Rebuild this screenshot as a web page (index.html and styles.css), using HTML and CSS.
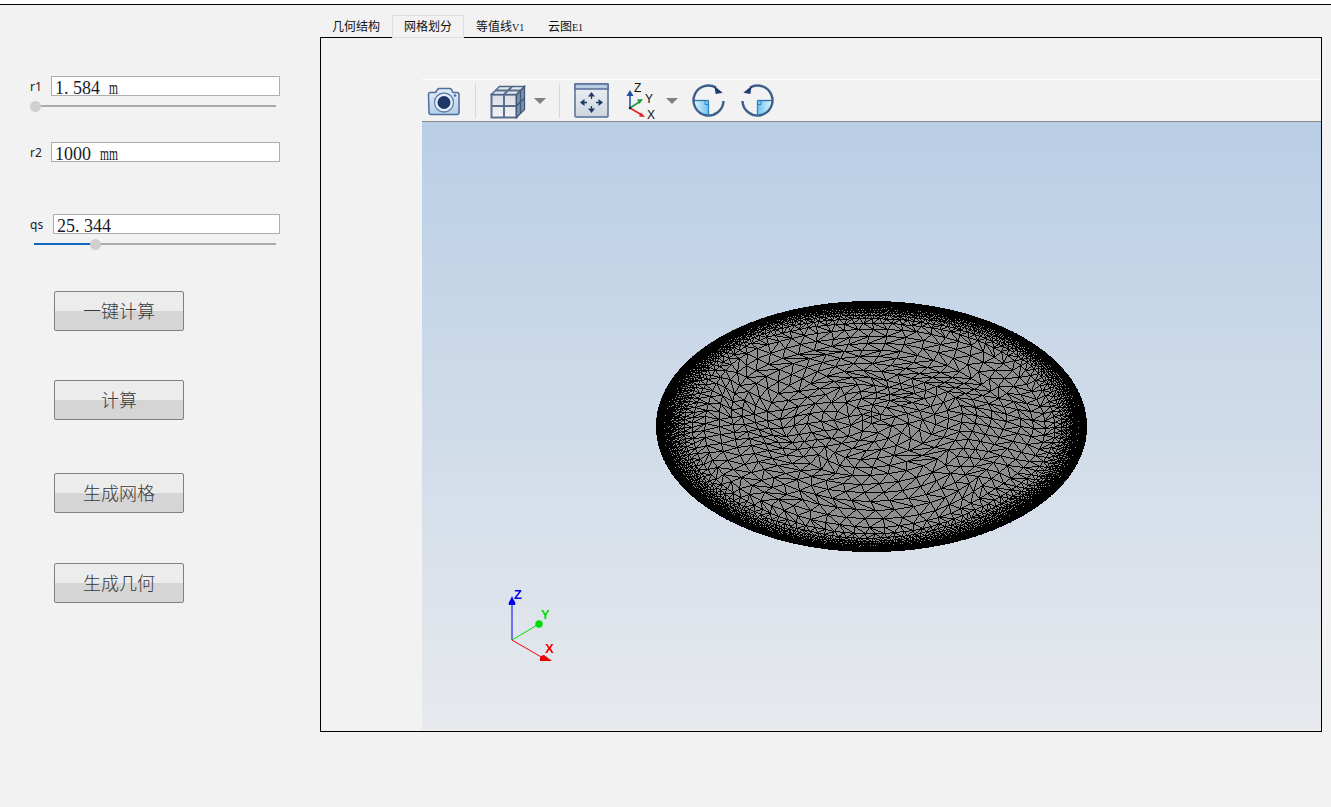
FILE: index.html
```html
<!DOCTYPE html>
<html lang="zh">
<head>
<meta charset="utf-8">
<title>网格划分</title>
<link rel="stylesheet" href="styles.css">
</head>
<body>
<div class="topbar"></div>
<div class="main">
  <aside class="sidebar">
    <div class="field field-r1">
      <label class="field-label">r1</label>
      <div class="input">1<span class="cell">.</span>584 <span class="latin">m</span></div>
    </div>
    <div class="slider slider-r1"><div class="handle" style="left:-5px"></div></div>

    <div class="field field-r2">
      <label class="field-label">r2</label>
      <div class="input">1000 <span class="latin latin-2">mm</span></div>
    </div>

    <div class="field field-qs">
      <label class="field-label label-wide">qs</label>
      <div class="input input-narrow">25<span class="cell">.</span>344</div>
    </div>
    <div class="slider slider-qs"><div class="fill" style="width:61px"></div><div class="handle" style="left:56px"></div></div>

    <button class="btn btn-1">一键计算</button>
    <button class="btn btn-2">计算</button>
    <button class="btn btn-3">生成网格</button>
    <button class="btn btn-4">生成几何</button>
  </aside>

  <section class="workspace">
    <div class="tabs">
      <div class="tab">几何结构</div>
      <div class="tab tab-active">网格划分</div>
      <div class="tab">等值线<span class="tab-latin">V1</span></div>
      <div class="tab">云图<span class="tab-latin">E1</span></div>
    </div>
    <div class="pane">
      <div class="viewer">
        <div class="toolbar">
          <svg class="ico ico-camera" width="36" height="32" viewBox="0 0 36 32">
            <defs>
              <linearGradient id="camBody" x1="0" y1="0" x2="0" y2="1"><stop offset="0" stop-color="#e4edf8"/><stop offset="1" stop-color="#b5cee9"/></linearGradient>
              <linearGradient id="cubeCell" x1="0" y1="0" x2="0" y2="1"><stop offset="0" stop-color="#d9dee6"/><stop offset="1" stop-color="#f2f3f5"/></linearGradient>
              <linearGradient id="fitBody" x1="0" y1="0" x2="0" y2="1"><stop offset="0" stop-color="#eef1f5"/><stop offset="1" stop-color="#cdd5e1"/></linearGradient>
              <linearGradient id="quad" x1="0" y1="0" x2="1" y2="0"><stop offset="0" stop-color="#6cc6ef"/><stop offset="1" stop-color="#e2f3fb"/></linearGradient>
            </defs>
            <path d="M2.500 9.500q0-2 2-2h5l2-3q.6-1 2-1h10q1.400 0 2 1l1.500 3h4q2 0 2 2v18q0 2-2 2h-26q-2 0-2-2z" fill="url(#camBody)" stroke="#4e6f99" stroke-width="1.500"/>
            <circle cx="18" cy="17.500" r="9.500" fill="#e8eff8" stroke="#5f80aa" stroke-width="1.300"/>
            <circle cx="18" cy="17.500" r="6.500" fill="#1d3768"/>
            <circle cx="29" cy="10.500" r="1.300" fill="#4e6f99"/>
          </svg>
          <span class="sep sep-1"></span>
          <svg class="ico ico-cube" width="36" height="36" viewBox="0 0 36 36">
            <path d="M1.500 11.500l8-8h25v23l-8 8z" fill="#5f7a9c"/>
            <path d="M1.500 11.500h25v23h-25z" fill="url(#cubeCell)" stroke="#5a6f8c" stroke-width="2"/>
            <path d="M1.500 11.500l8-8h25l-8 8z" fill="#e4e8ef" stroke="#4f6788" stroke-width="1.400"/>
            <path d="M14 11.500v23M1.500 23h25M22 3.500l-8 8M5.500 7.500h25" stroke="#5a6f8c" stroke-width="2" fill="none"/>
            <path d="M26.500 11.500l8-8v23l-8 8zM26.500 23l8-8M30.500 7.500v23" fill="#7b92ae" stroke="#3f5778" stroke-width="1.300"/>
          </svg>
          <span class="caret caret-1"></span>
          <span class="sep sep-2"></span>
          <svg class="ico ico-fit" width="35" height="35" viewBox="0 0 35 35">
            <rect x="1" y="1" width="33" height="33" rx="1" fill="url(#fitBody)" stroke="#566f93" stroke-width="1.500"/>
            <rect x="1" y="1" width="33" height="5" fill="#b7cbe3" stroke="#566f93" stroke-width="1.500"/>
            <g fill="#1f3a66" stroke="#1f3a66">
              <path d="M17.500 9l-3.500 4.500h7zM17.500 30l-3.500-4.500h7zM6 19.500l4.500-3.500v7zM29 19.500l-4.500-3.500v7z" stroke="none"/>
              <path d="M17.500 12v4M17.500 23v4M9 19.500h4M22 19.500h4" stroke-width="1.300" fill="none"/>
            </g>
          </svg>
          <svg class="ico ico-axes" width="32" height="38" viewBox="0 0 32 38">
            <path d="M5 26V12" stroke="#2557a8" stroke-width="1.600"/><path d="M5 8l-3.500 6h7z" fill="#1f4fa3"/>
            <path d="M5 26l10-6.500" stroke="#1c9a45" stroke-width="1.600"/><path d="M18 17l-6 .5 2.500 4.500z" fill="#1c9a45"/>
            <path d="M5 26l11 6.500" stroke="#e02424" stroke-width="1.600"/><path d="M20 35l-6-.500 2-4z" fill="#e02424"/>
            <circle cx="5" cy="26" r="1.300" fill="#222"/>
            <text x="9" y="10" class="axis-tb">Z</text>
            <text x="20" y="21" class="axis-tb">Y</text>
            <text x="22" y="37" class="axis-tb">X</text>
          </svg>
          <span class="caret caret-2"></span>
          <svg class="ico ico-rot1" width="33" height="33" viewBox="0 0 33 33">
            <g transform="matrix(-1 0 0 1 33 0)">
              <path d="M16.500 16.500h15a15 15 0 0 1-15 15z" fill="url(#quad)"/>
              <path d="M9 3.500A15 15 0 1 1 1.500 17" fill="none" stroke="#3d5f8a" stroke-width="2.400"/>
              <path d="M16.500 16.500h15" stroke="#2f6fa8" stroke-width="1.300" fill="none"/>
              <path d="M16.500 16.500v15" stroke="#2f86c5" stroke-width="1.300" fill="none"/>
              <path d="M20 16.500v4h-3.500" stroke="#2f86c5" fill="none"/>
              <path d="M10.700 2l-8.400 6.700 7 1.300z" fill="#1c3a6b"/>
            </g>
          </svg>
          <svg class="ico ico-rot2" width="33" height="33" viewBox="0 0 33 33">
            <path d="M16.500 16.500h15a15 15 0 0 1-15 15z" fill="url(#quad)"/>
            <path d="M9 3.500A15 15 0 1 1 1.500 17" fill="none" stroke="#3d5f8a" stroke-width="2.400"/>
            <path d="M16.500 16.500h15" stroke="#2f6fa8" stroke-width="1.300" fill="none"/>
            <path d="M16.500 16.500v15" stroke="#2f86c5" stroke-width="1.300" fill="none"/>
            <path d="M20 16.500v4h-3.500" stroke="#2f86c5" fill="none"/>
            <path d="M10.700 2l-8.400 6.700 7 1.300z" fill="#1c3a6b"/>
          </svg>
        </div>
        <div class="viewport">
          <canvas id="mesh" class="mesh" width="899" height="608"></canvas>
          <svg class="triad" width="66" height="84" viewBox="0 0 66 84">
            <path d="M18 51V14" stroke="#0000ee" stroke-width="1"/>
            <path d="M18 7q1 3 3 6 1 3-.5 3h-5q-1.500 0-.5-3 2-3 3-6z" fill="#0000ee"/>
            <path d="M18 51l27-16" stroke="#00dd00" stroke-width="1"/>
            <circle cx="45" cy="35" r="3.700" fill="#00dd00"/>
            <path d="M18 51l31 18" stroke="#ee0000" stroke-width="1"/>
            <path d="M46 72a4.500 4.500 0 0 1 4-6l8 6z" fill="#ee0000"/>
            <text x="20" y="10" class="axis-z">Z</text>
            <text x="47" y="30" class="axis-y">Y</text>
            <text x="51" y="64" class="axis-x">X</text>
          </svg>
        </div>
      </div>
    </div>
  </section>
</div>
<script src="script.js"></script>
</body>
</html>
```
FILE: styles.css
```css
* { box-sizing: border-box; }
html, body { margin: 0; padding: 0; }
body {
  width: 1331px;
  height: 807px;
  overflow: hidden;
  background: #f2f2f2;
  font-family: "Noto Sans CJK SC", sans-serif;
}
.topbar {
  height: 5px;
  background: #fff;
  border-bottom: 1px solid #000;
}
.main { display: flex; }

/* left panel */
.sidebar { width: 320px; flex: none; display: flex; flex-direction: column; }
.field { display: flex; align-items: center; margin-left: 30px; height: 20px; }
.field-r1 { margin-top: 71px; }
.field-r2 { margin-top: 35px; }
.field-qs { margin-top: 52px; }
.field-label {
  width: 21px;
  font: 12px "Noto Sans", sans-serif;
  color: #222;
}
.label-wide { width: 23px; }
.input {
  width: 229px;
  height: 20px;
  padding: 1px 0 0 3px;
  background: #fff;
  border: 1px solid #adadad;
  font: 18px/20px "Liberation Serif", serif;
  color: #1a1a2a;
  white-space: pre;
  overflow: hidden;
  word-spacing: 4.5px;
}
.input-narrow { width: 227px; }
.cell { display: inline-block; width: 9px; }
.latin {
  display: inline-block;
  width: 14px;
  margin-right: -5px;
  transform: scaleX(.64);
  transform-origin: left;
}
.latin-2 { width: 28px; margin-right: -10px; }

.slider {
  position: relative;
  height: 2px;
  margin-top: 9px;
  background: #aaa;
  width: 241px;
  margin-left: 35px;
}
.slider-qs { width: 242px; margin-left: 34px; }
.fill { height: 2px; background: #0f68bd; }
.handle {
  position: absolute;
  top: -4px;
  width: 11px;
  height: 11px;
  border-radius: 50%;
  background: #cfcfcf;
}
.btn {
  display: block;
  width: 130px;
  height: 40px;
  margin-left: 54px;
  padding: 0 0 3px;
  border: 1px solid #808080;
  border-radius: 2px;
  background: linear-gradient(#ececec 0, #ececec 50%, #d5d5d5 50%, #d5d5d5 100%);
  font: 18px/34px "Noto Sans CJK SC", sans-serif;
  font-weight: 300;
  color: #3a3a3a;
}
.btn-1 { margin-top: 46px; }
.btn-2 { margin-top: 49px; }
.btn-3 { margin-top: 53px; }
.btn-4 { margin-top: 50px; }

/* workspace */
.workspace { width: 1002px; flex: none; margin-top: 10px; display: flex; flex-direction: column; }
.tabs { display: flex; height: 22px; position: relative; z-index: 1; }
.tab {
  width: 72px;
  height: 22px;
  padding: 3px 0 0 12px;
  font-family: "Liberation Serif", "Noto Sans CJK SC", serif;
  font-size: 12px;
  line-height: 18px;
  color: #111;
  white-space: nowrap;
}
.tab-latin { font-size: 10px; }
.tab-active {
  height: 23px;
  background: #f2f2f2;
  border: 1px solid #dcdcdc;
  padding: 2px 0 0 11px;
}
.pane {
  height: 695px;
  border: 1px solid #000;
  padding: 41px 0 0 101px;
  display: flex;
}
.viewer { flex: 1; display: flex; flex-direction: column; min-width: 0; }
.toolbar {
  height: 43px;
  flex: none;
  display: flex;
  align-items: center;
  border-top: 1px solid #fff;
  border-bottom: 1px solid #8a8a8a;
  background: #f2f2f2;
}
.ico { flex: none; display: block; }
.ico-camera { margin-left: 4px; }
.ico-cube { margin-left: 14px; }
.ico-fit { margin-left: 14px; }
.ico-axes { margin-left: 16px; }
.ico-rot1 { margin-left: 14px; }
.ico-rot2 { margin-left: 16px; }
.sep { flex: none; width: 1px; height: 35px; background: #d8d8d8; }
.sep-1 { margin-left: 13px; }
.sep-2 { margin-left: 13px; }
.caret {
  flex: none;
  width: 0;
  height: 0;
  border-left: 6px solid transparent;
  border-right: 6px solid transparent;
  border-top: 6px solid #808080;
}
.caret-1 { margin-left: 8px; }
.caret-2 { margin-left: 9px; }
.axis-tb { font: 12px "Liberation Sans", sans-serif; fill: #111; }

.viewport {
  position: relative;
  height: 608px;
  background: linear-gradient(#b9cee6, #e7e9ed);
}
.mesh { display: block; }
.triad { position: absolute; left: 72px; top: 467px; }
.axis-z, .axis-y, .axis-x { font: bold 13px "Liberation Sans", sans-serif; }
.axis-z { fill: #0000ee; }
.axis-y { fill: #00dd00; }
.axis-x { fill: #ee0000; }
```
FILE: script.js
```js
(function () {
  var canvas = document.getElementById('mesh');
  var ctx = canvas.getContext('2d');
  var W = canvas.width, H = canvas.height;
  var img = ctx.createImageData(W, H);
  var d = img.data;
  var CX = 449, CY = 304, RX = 215, RY = 125;

  var seed = 12345;
  function rnd() { seed = (seed * 1664525 + 1013904223) >>> 0; return seed / 4294967296; }

  function put(x, y, v) {
    if (x < 0 || y < 0 || x >= W || y >= H) return;
    var i = (y * W + x) * 4;
    d[i] = d[i + 1] = d[i + 2] = v; d[i + 3] = 255;
  }
  for (var y = 0; y < H; y++) for (var x = 0; x < W; x++) {
    var u = (x + .5 - CX) / RX, v = (y + .5 - CY) / RY;
    if (u * u + v * v <= 1) put(x, y, 0x8e);
  }
  function line(x0, y0, x1, y1) {
    x0 = Math.round(x0); y0 = Math.round(y0); x1 = Math.round(x1); y1 = Math.round(y1);
    var dx = Math.abs(x1 - x0), dy = Math.abs(y1 - y0);
    var sx = x0 < x1 ? 1 : -1, sy = y0 < y1 ? 1 : -1, e = dx - dy;
    for (;;) {
      put(x0, y0, 0);
      if (x0 === x1 && y0 === y1) break;
      var e2 = 2 * e;
      if (e2 > -dy) { e -= dy; x0 += sx; }
      if (e2 < dx) { e += dx; y0 += sy; }
    }
  }

  // uniform cells over most of the disc, grading sharply into the black rim
  function spacing(r) {
    var t = Math.min(1, Math.max(1 - r, 0) / 0.24);
    return 0.003 + 0.062 * Math.pow(t, 1.4);
  }
  var rings = [], r = 0.05, lastPhase = 0;
  while (r < 1) {
    var s = spacing(r);
    var cnt = Math.max(6, Math.round(2 * Math.PI * r / (s * 1.15)));
    // half a cell of stagger from ring to ring gives regular triangles
    lastPhase += Math.PI / cnt + (rnd() - .5) * 0.02;
    rings.push({ r: r, n: cnt, phase: lastPhase });
    r += s * 0.95;
  }
  rings.push({ r: 1, n: rings[rings.length - 1].n, phase: lastPhase });

  // gentle warp so that the interior forms rosettes rather than plain circles
  function project(rr, a) {
    var w = (1 - rr) * rr * 4;
    var rw = rr * (1 + 0.03 * w * Math.sin(3 * a + 0.7) + 0.02 * w * Math.cos(5 * a + rr * 9));
    var aw = a + 0.1 * w * Math.sin(2 * a + rr * 5);
    return [CX + RX * rw * Math.cos(aw), CY - RY * rw * Math.sin(aw) - 10 * (1 - rr) * (1 - rr)];
  }
  function pts(ring) {
    var out = [];
    for (var i = 0; i < ring.n; i++) {
      var ang = ring.phase + i / ring.n * 2 * Math.PI;
      out.push(project(ring.r, ang));
    }
    return out;
  }

  var prev = pts(rings[0]);
  var hub = project(0, 0);
  for (var i = 0; i < prev.length; i++) {
    var q = prev[(i + 1) % prev.length];
    line(prev[i][0], prev[i][1], q[0], q[1]);
    line(prev[i][0], prev[i][1], hub[0], hub[1]);
  }
  for (var k = 1; k < rings.length; k++) {
    var cur = pts(rings[k]);
    var np = prev.length, nc = cur.length;
    for (var c = 0; c < nc; c++) {
      var n = cur[(c + 1) % nc];
      line(cur[c][0], cur[c][1], n[0], n[1]);
    }
    // zip the two rings together, starting from the angularly closest vertex
    var off = ((rings[k - 1].phase - rings[k].phase) / (2 * Math.PI) * nc) % nc;
    var b0 = Math.round(off) + nc;
    var a = 0, b = 0;
    while (a < np || b < nc) {
      var pa = prev[a % np], cb = cur[(b0 + b) % nc];
      line(pa[0], pa[1], cb[0], cb[1]);
      if (b >= nc || (a < np && (a + 1) / np <= (b + 1) / nc)) a++; else b++;
    }
    prev = cur;
  }
  ctx.putImageData(img, 0, 0);
})();
```
